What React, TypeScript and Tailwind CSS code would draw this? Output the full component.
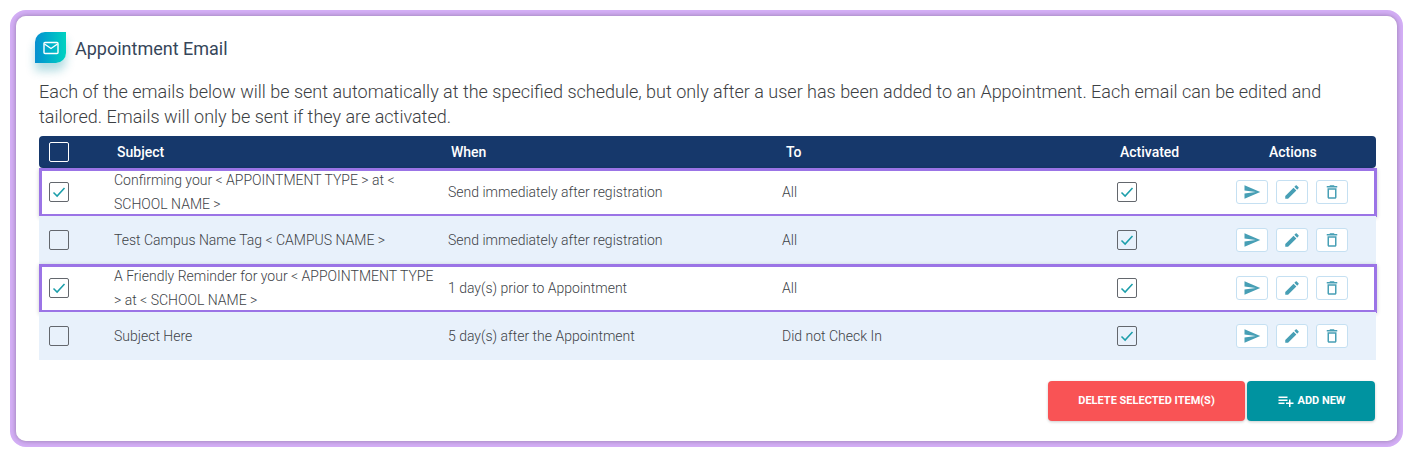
const rows = [
  { subject: 'Confirming your < APPOINTMENT TYPE > at < SCHOOL NAME >', when: 'Send immediately after registration', to: 'All', checked: true },
  { subject: 'Test Campus Name Tag < CAMPUS NAME >', when: 'Send immediately after registration', to: 'All', checked: false },
  { subject: 'A Friendly Reminder for your < APPOINTMENT TYPE > at < SCHOOL NAME >', when: '1 day(s) prior to Appointment', to: 'All', checked: true },
  { subject: 'Subject Here', when: '5 day(s) after the Appointment', to: 'Did not Check In', checked: false },
]

function Check({ checked }: { checked: boolean }) {
  return (
    <span className="flex h-5 w-5 items-center justify-center rounded-[2px] border border-[#63676d]">
      {checked && (
        <svg width="16" height="16" viewBox="0 0 16 16" fill="none">
          <path d="M2.500 8.500l3.600 3.600 7.400-8.200" stroke="#1b9eaa" strokeWidth="1.500" />
        </svg>
      )}
    </span>
  )
}

function ActionButton({ d }: { d: string }) {
  return (
    <button className="flex h-6 w-8 items-center justify-center rounded-[3px] border border-[#c5e0f2] bg-white">
      <svg width="18" height="18" viewBox="0 0 24 24" fill="#479fb5">
        <path d={d} />
      </svg>
    </button>
  )
}

export default function App() {
  return (
    <div className="h-[457px] w-[1413px] bg-white p-[10px] font-['Roboto',sans-serif] antialiased">
      <div className="h-[437px] rounded-[16px] border-[6px] border-[#d3aef5]">
        <div className="h-full rounded-[10px] bg-white pl-[23px] pr-[21px] pt-[16px] shadow-[0_0_5px_rgba(0,0,0,0.3)]">
          {/* Heading */}
          <div className="-ml-[4px] flex h-[31px] items-start gap-[9px]">
            <div className="flex h-[31px] w-[31px] items-center justify-center rounded-br-[10px] rounded-tl-[10px] bg-gradient-to-r from-[#0a8fd0] to-[#00d2c0] shadow-[0_8px_10px_rgba(0,140,160,0.3)]">
              <svg width="16" height="14" viewBox="0 0 16 14" fill="none">
                <rect x="1" y="1.500" width="14" height="11" rx="1" stroke="white" strokeWidth="1.400" />
                <path d="M1.500 3l6.500 4.500L14.500 3" stroke="white" strokeWidth="1.400" />
              </svg>
            </div>
            <h1 className="pt-px text-[18px] leading-[31px] text-[#36465a]">Appointment Email</h1>
          </div>

          <p className="mt-[16px] text-[18px] font-light leading-[25px] text-[#3c4043]">
            Each of the emails below will be sent automatically at the specified schedule, but only after a user has been added to an Appointment. Each email can be edited and tailored. Emails will only be sent if they are activated.
          </p>

          {/* Table */}
          <div className="mt-[7px]">
            <div className="grid h-8 grid-cols-[78px_334px_335px_334px_119px_137px] items-center rounded-[4px] bg-[#16386b] text-[14px] font-medium text-white">
              <span className="ml-[10px] h-5 w-5 rounded-[2px] border border-white" />
              <span>Subject</span>
              <span>When</span>
              <span>To</span>
              <span>Activated</span>
              <span className="pl-[30px]">Actions</span>
            </div>
            {rows.map((row, i) => (
              <div
                key={i}
                className={`relative grid h-12 grid-cols-[75px_334px_334px_335px_119px_140px] items-center text-[14px] font-light leading-6 text-[#3d4247] ${i % 2 === 0 ? 'bg-white' : 'bg-[#e8f1fb]'}`}
              >
                <span className="ml-[10px]">
                  <Check checked={row.checked} />
                </span>
                <span className="pr-[12px]">{row.subject}</span>
                <span>{row.when}</span>
                <span>{row.to}</span>
                <span>
                  <Check checked />
                </span>
                <div className="flex gap-2">
                  <ActionButton d="M2.010 21L23 12 2.010 3 2 10l15 2-15 2z" />
                  <ActionButton d="M3 17.250V21h3.750L17.810 9.940l-3.750-3.750L3 17.250zM20.710 7.040c.39-.39.39-1.020 0-1.410l-2.340-2.340c-.39-.39-1.020-.39-1.410 0l-1.830 1.830 3.750 3.750 1.830-1.830z" />
                  <ActionButton d="M6 19c0 1.100.9 2 2 2h8c1.100 0 2-.9 2-2V7H6v12zM8 9h8v10H8V9zm7.500-5l-1-1h-5l-1 1H5v2h14V4z" />
                </div>
                {row.checked && (
                  <span className="absolute -bottom-px -right-px left-0 top-0 border-[3px] border-[#9b74e6] shadow-[0_1px_4px_rgba(0,0,0,0.2)]" />
                )}
              </div>
            ))}
          </div>

          {/* Footer buttons */}
          <div className="mt-[21px] flex justify-end gap-[2px] pr-px">
            <button className="h-10 w-[197px] rounded-[4px] bg-[#f95355] text-[11px] font-bold text-white shadow-[0_1px_3px_rgba(0,0,0,0.2)]">
              DELETE SELECTED ITEM(S)
            </button>
            <button className="flex h-10 w-32 items-center justify-center gap-[3px] rounded-[4px] bg-[#0093a0] text-[11px] font-bold text-white shadow-[0_1px_3px_rgba(0,0,0,0.2)]">
              <svg width="18" height="18" viewBox="0 0 24 24" fill="white">
                <path d="M14 10H2v2h12v-2zm0-4H2v2h12V6zm4 8v-4h-2v4h-4v2h4v4h2v-4h4v-2h-4zM2 16h8v-2H2v2z" />
              </svg>
              ADD NEW
            </button>
          </div>
        </div>
      </div>
    </div>
  )
}
